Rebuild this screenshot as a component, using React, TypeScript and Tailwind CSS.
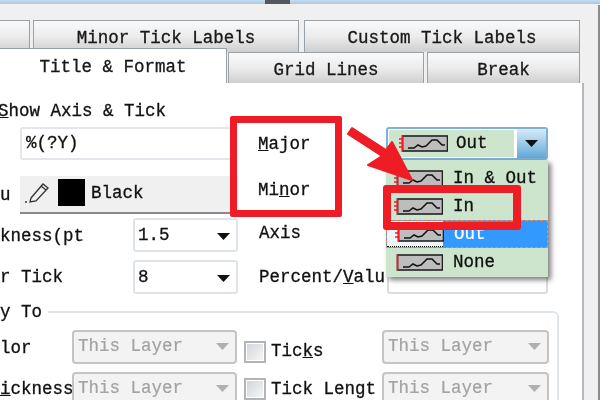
import React from 'react';

const Tab = ({ label, className = '' }: { label: string; className?: string }) => (
  <div className={`flex items-center justify-center border border-b-0 border-[#98a0a8] bg-gradient-to-b from-[#fafafa] via-[#ececec] to-[#cfcfcf] pt-[5px] text-[#1a1a1a] ${className}`}>
    {label}
  </div>
);

// little axis preview used in the tick dropdown
const TickIcon = ({ ticks = 0 }: { ticks?: number }) => (
  <svg width="49" height="17" viewBox="0 0 49 17" className="shrink-0">
    <rect x="3.5" y="1" width="45" height="15" fill="#bdbdbd" stroke="#222" strokeWidth="1.6" />
    <path d="M9 13 L15 13 L19 10 L23 12 L27 11 L33 5 L38 5 L43 10 L46 10" fill="none" stroke="#111" strokeWidth="1.5" />
    <path d="M3.5 0.5 V16.5" stroke="#f01c24" strokeWidth="1.6" />
    {ticks > 0 && <path d="M0 4 H4 M0 8 H4 M0 12 H4" stroke="#f01c24" strokeWidth="1.4" />}
  </svg>
);

const Arrow = ({ color = '#111', size = 'w-[13px] h-[7px]' }: { color?: string; size?: string }) => (
  <svg viewBox="0 0 13 7" className={size}>
    <path d="M0 0 H13 L6.5 7 Z" fill={color} />
  </svg>
);

const Select = ({ value, w }: { value: string; w: string }) => (
  <div className={`flex h-[34px] items-center justify-between rounded-[3px] border-2 border-[#dfe4ea] bg-white pl-[3px] pr-[6px] pt-[2px] ${w}`}>
    <span>{value}</span>
    <Arrow />
  </div>
);

const Disabled = ({ w }: { w: string }) => (
  <div className={`flex h-[34px] shrink-0 items-center justify-between rounded-[4px] border-2 border-[#c4c4c4] bg-[#f3f3f3] pl-1 pr-[6px] text-[#a3a3a3] [-webkit-text-stroke:0.2px_#a3a3a3] ${w}`}>
    <span>This Layer</span>
    <Arrow color="#b0b0b0" />
  </div>
);

const Check = ({ className = '' }: { className?: string }) => (
  <div className={`ml-[7px] h-[22px] w-[22px] shrink-0 border-2 border-[#b4b4b4] bg-gradient-to-br from-[#cfd4d9] to-[#f8f8f8] ring-1 ring-inset ring-white ${className}`} />
);

const Item = ({ label, ticks, active }: { label: string; ticks?: number; active?: boolean }) => (
  <div className={`flex h-[28px] items-center ${active ? 'border border-dashed border-[#f08a50] bg-[#3399ff] text-white [-webkit-text-stroke:0.2px_#fff]' : ''}`}>
    <div className={`flex h-full w-[56px] items-center pl-[8px] ${active ? 'border-b border-dotted border-black bg-[#eef5fc]' : ''}`}>
      <TickIcon ticks={ticks} />
    </div>
    <span className="ml-[11px] mt-[2px]">{label}</span>
  </div>
);

export default function App() {
  return (
    <div className="relative flex h-[400px] w-[600px] flex-col overflow-hidden bg-[#f0f0f0] font-['Liberation_Mono',monospace] text-[17.5px] leading-none text-[#111] blur-[0.35px] [-webkit-text-stroke:0.3px_#111]">
      <div className="flex h-1 shrink-0 bg-gradient-to-b from-[#c5dcf0] to-[#a9c8e2]">
        <div className="ml-[265px] w-[25px] bg-[#55585c]" />
      </div>

      {/* tab rows */}
      <div className="mt-[16px] flex h-[32px] shrink-0 pr-[20px]">
        <Tab label="" className="w-[30px] border-l-0" />
        <div className="w-[3px]" />
        <Tab label="Minor Tick Labels" className="w-[266px]" />
        <div className="w-[5px]" />
        <Tab label="Custom Tick Labels" className="w-[276px]" />
      </div>
      <div className="flex h-[31px] shrink-0 items-end pr-[20px]">
        <Tab label="Title & Format" className="relative z-10 h-[35px] w-[227px] border-l-0 !bg-none bg-white !pt-[3px]" />
        <div className="w-[1px]" />
        <Tab label="Grid Lines" className="h-[31px] w-[196px]" />
        <div className="w-[3px]" />
        <Tab label="Break" className="h-[31px] w-[153px]" />
      </div>

      {/* panel */}
      <div className="w-[584px] flex-1 border-r-2 border-[#b4b9bf] bg-white">
        <div className="-ml-[2px] mt-[18px] h-[18px] pt-[2px]"><u>S</u>how Axis &amp; Tick</div>

        <div className="mt-[8px] flex h-[33px]">
          <div className="ml-[20px] flex w-[216px] items-center rounded-[3px] border-2 border-[#e3e6ea] pl-1">%(?Y)</div>
          <div className="ml-[22px] flex w-[128px] items-center pt-[2px]"><u>M</u>ajor</div>
          <div className="flex w-[162px] rounded-[3px] border-2 border-[#7fb0d8] bg-white">
            <div className="m-[1px] flex w-[125px] items-center bg-[#cce5cc] pl-[10px]">
              <TickIcon ticks={2} />
              <span className="ml-[8px]">Out</span>
            </div>
            <div className="ml-[2px] flex flex-1 items-center justify-center bg-gradient-to-b from-[#d8ebf7] to-[#5fa8d8]"><Arrow /></div>
          </div>
        </div>

        <div className="mt-[16px] flex h-[38px]">
          <div className="flex w-[20px] items-center pt-[1px]">u</div>
          <div className="flex w-[218px] items-center border-b-2 border-[#8a8a8a] bg-[#f0f0f0] pb-1 pl-[5px]">
            <svg width="24" height="22" viewBox="0 0 24 22">
              <path d="M6 17 L18 3 L23 7 L11 20 L5 21 Z M16 5 L21 9" fill="none" stroke="#333" strokeWidth="1.3" />
              <path d="M0 21 H2" stroke="#333" strokeWidth="1.4" />
            </svg>
            <div className="ml-[9px] h-[27px] w-[27px] bg-black" />
            <span className="ml-[6px] mt-[4px]">Black</span>
          </div>
          <div className="ml-[20px] flex items-center pb-[8px]"><span>Mi<u>n</u>or</span></div>
        </div>

        <div className="mt-[4px] flex h-[34px]">
          <div className="flex w-[133px] items-center pt-[3px]">kness(pt</div>
          <Select value="1.5" w="w-[105px]" />
          <div className="ml-[21px] flex items-center pb-[2px]">Axis</div>
        </div>

        <div className="mt-[8px] flex h-[34px]">
          <div className="flex w-[133px] items-center pt-[2px]">r Tick</div>
          <Select value="8" w="w-[105px]" />
          <div className="ml-[21px] flex w-[128px] items-center pt-[2px]"><span>Percent/<u>V</u>alu</span></div>
          <div className="w-[161px] rounded-[3px] border-2 border-[#dcdcdc]" />
        </div>

        {/* apply to group */}
        <div className="mt-[17px] w-[559px] rounded-tr-[6px] border-r-2 border-t-2 border-[#e0e6ec]">
          <div className="-mt-[9px] w-fit bg-white pr-[6px]">y To</div>
          <div className="mt-[8px] flex h-[34px] items-center">
            <div className="w-[72px] shrink-0 pt-[5px]">lor</div>
            <Disabled w="w-[165px]" />
            <Check className="mt-[10px]" />
            <div className="ml-[5px] w-[111px] shrink-0 pt-[11px]"><span>Tic<u>k</u>s</span></div>
            <Disabled w="w-[167px]" />
          </div>
          <div className="mt-[8px] flex h-[34px] items-center">
            <div className="w-[72px] shrink-0 pt-[2px]"><u>i</u>ckness</div>
            <Disabled w="w-[165px]" />
            <Check />
            <div className="ml-[5px] w-[111px] shrink-0 pt-[2px]">Tick Lengt</div>
            <Disabled w="w-[167px]" />
          </div>
        </div>
      </div>

      <div className="absolute bottom-0 right-0 top-[5px] w-[2px] bg-[#8d8d8d]" />

      {/* open dropdown */}
      <div className="absolute left-[386px] top-[160px] w-[162px] bg-[#cce5cc] pb-[1px] pt-[4px] shadow-[3px_3px_5px_rgba(0,0,0,0.5)]">
        <Item label="In & Out" ticks={2} />
        <Item label="In" ticks={2} />
        <Item label="Out" ticks={2} active />
        <Item label="None" />
      </div>

      {/* red annotations on top of the screenshot */}
      <div className="absolute left-[230px] top-[116px] h-[101px] w-[112px] rounded-[2px] border-[7px] border-[#ee1c25]" />
      <div className="absolute left-[383px] top-[185px] h-[45px] w-[138px] rounded-[3px] border-[8px] border-[#ee1c25]" />
      <svg className="absolute left-[340px] top-[120px]" width="90" height="75" viewBox="0 0 90 75">
        <path d="M12 8 L8 14 L42 36 L28 45 L72 60 L52 22 L46 30 Z" fill="#ee1c25" stroke="#ee1c25" strokeWidth="2" strokeLinejoin="round" />
      </svg>
    </div>
  );
}
